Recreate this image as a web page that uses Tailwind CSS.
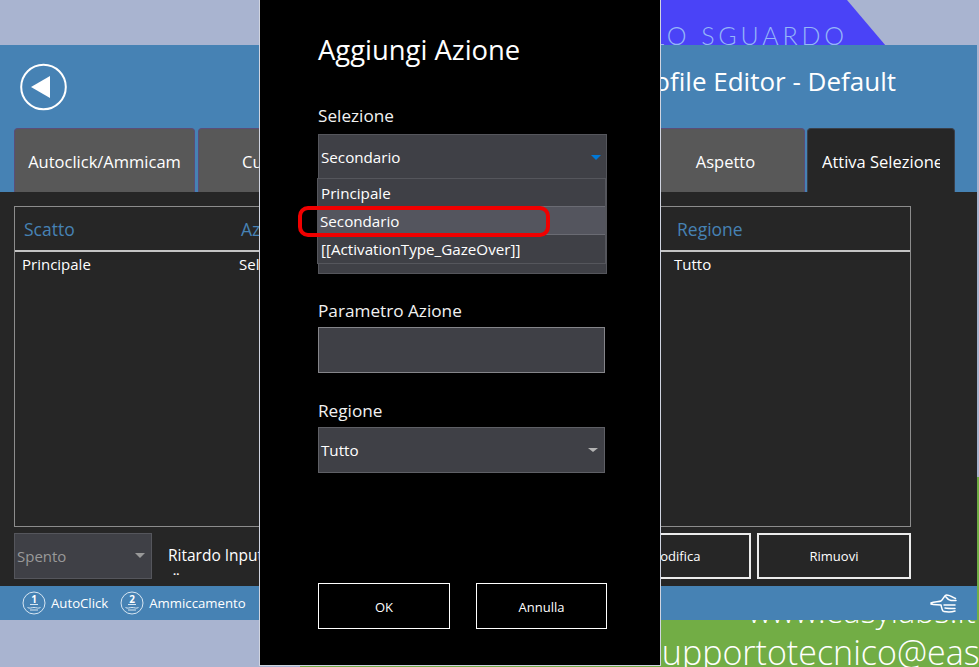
<!DOCTYPE html>
<html lang="en">
<head>
    <meta charset="UTF-8">
    <title>Profile Editor</title>
    <script src="https://cdn.jsdelivr.net/npm/@tailwindcss/browser@4"></script>
</head>
<body class="relative w-[979px] h-[667px] overflow-hidden bg-[#a9b4d0] font-['Open_Sans','Noto_Sans',sans-serif] text-white">

    <!-- desktop wallpaper behind the window -->
    <svg class="absolute left-[300px] top-0" width="600" height="46" viewBox="0 0 600 46">
        <polygon points="0,0 547,0 586,46 0,46" fill="#4a43f7"></polygon>
    </svg>
    <div class="absolute right-[131px] top-[19px] font-['Lato',sans-serif] font-light text-[25px] leading-[32px] tracking-[3.85px] text-[#95b6f8] whitespace-nowrap">LO SGUARDO</div>
    <div class="absolute left-[300px] top-[477px] w-[679px] h-[190px] bg-[#72ad45] overflow-hidden">
        <div class="absolute left-[448px] top-[115px] font-['Open_Sans',sans-serif] font-light text-[32px] leading-[38px] tracking-[0.2px] whitespace-nowrap">www.easylabs.it</div>
        <div class="absolute left-[346px] top-[155px] font-['Open_Sans',sans-serif] font-light text-[34px] leading-[40px] whitespace-nowrap">supportotecnico@easylabs.it</div>
    </div>

    <!-- main window -->
    <div class="relative mt-[45px] w-[977px] h-[575px] flex flex-col bg-[#4682b4]">
        <div class="h-[83px] flex items-center justify-between pl-[20px] pr-[81px]">
            <svg width="48" height="48" viewBox="0 0 48 48">
                <circle cx="23.5" cy="24" r="22.3" fill="none" stroke="#fff" stroke-width="2"></circle>
                <polygon points="11,24 30,13 30,35" fill="#fff"></polygon>
            </svg>
            <div class="text-[26px] leading-[34px] whitespace-nowrap -mt-[12px]">Profile Editor - Default</div>
        </div>

        <div class="h-[64px] flex pl-[14px] text-[16.5px]">
            <div class="w-[181px] mr-[3px] flex items-center justify-center pt-[3px] bg-[#585858] border border-b-0 border-[#5b4d78] rounded-t-[4px] overflow-hidden whitespace-nowrap">Autoclick/Ammicam</div>
            <div class="w-[200px] mr-[2px] flex items-center pl-[43px] pt-[3px] bg-[#585858] border border-b-0 border-[#5b4d78] rounded-t-[4px]">Cursore</div>
            <div class="w-[244px] mr-[2px] bg-[#585858] border border-b-0 border-[#5b4d78] rounded-t-[4px]"></div>
            <div class="w-[159px] mr-[2px] flex items-center justify-center pt-[3px] bg-[#585858] border border-b-0 border-[#5b4d78] rounded-t-[4px]">Aspetto</div>
            <div class="w-[148px] flex items-center pl-[14px] pt-[3px] bg-[#262626] border border-b-0 border-[#3a3f4a] rounded-t-[4px] overflow-hidden whitespace-nowrap"><span class="w-[118px] overflow-hidden">Attiva Selezione</span></div>
        </div>

        <div class="h-[394px] bg-[#262626] pt-[14px] pl-[14px]">
            <div class="w-[897px] h-[321px] border border-[#8c8c8c] flex flex-col">
                <div class="h-[45px] shrink-0 grid grid-cols-[217px_436px_1fr] items-center pl-[9px] pt-[2px] border-b-2 border-[#c4c4c4] text-[17.5px] text-[#4682b4]">
                    <span>Scatto</span>
                    <span>Azione</span>
                    <span>Regione</span>
                </div>
                <div class="grid grid-cols-[217px_435px_1fr] pl-[7px] pt-[2px] text-[15px] leading-[20px]">
                    <span>Principale</span>
                    <span>Selezione</span>
                    <span>Tutto</span>
                </div>
            </div>
            <div class="mt-[6px] w-[897px] h-[46px] flex items-stretch">
                <div class="w-[138px] flex items-center justify-between pl-[2px] pr-[6px] bg-[#3f4046] border border-[#55565c] text-[15px] text-[#999999]">
                    <span>Spento</span>
                    <span class="w-0 h-0 border-x-[5px] border-t-[5px] border-x-transparent border-t-[#999999] -mt-[2px]"></span>
                </div>
                <div class="ml-[16px] w-[260px] pt-[12px] text-[15.5px] leading-[20px] overflow-hidden">Ritardo Input<div class="pl-[5px] font-bold text-[11px] leading-[12px]">..</div></div>
                <div class="ml-[14px] w-[150px] flex items-center justify-center pt-[1px] border-2 border-[#ececec] text-[13px]">Aggiungi</div>
                <div class="ml-[6px] w-[153px] flex items-center justify-center pt-[1px] border-2 border-[#ececec] text-[13px]">Modifica</div>
                <div class="ml-[6px] w-[154px] flex items-center justify-center pt-[1px] border-2 border-[#ececec] text-[13px]">Rimuovi</div>
            </div>
        </div>

        <div class="h-[34px] flex items-center justify-between pl-[22px] pr-[19px] text-[13.2px]">
            <div class="flex items-center">
                <svg width="24" height="24" viewBox="0 0 24 24">
                    <circle cx="12" cy="12" r="11" fill="none" stroke="#d7e6f2" stroke-width="1"></circle>
                    <text x="12" y="12" text-anchor="middle" font-size="10" font-weight="700" fill="#fff">1</text>
                    <path d="M8 13.500h8M5.500 16.500c2 1.400 4 0 6.500 0s4.500 1.400 6.500 0M8 19h8" fill="none" stroke="#d7e6f2" stroke-width="1"></path>
                </svg>
                <span class="ml-[5px] pt-[1px]">AutoClick</span>
                <svg width="24" height="24" viewBox="0 0 24 24" class="ml-[12px]">
                    <circle cx="12" cy="12" r="11" fill="none" stroke="#d7e6f2" stroke-width="1"></circle>
                    <text x="12" y="12" text-anchor="middle" font-size="10" font-weight="700" fill="#fff">2</text>
                    <path d="M8 13.500h8M5.500 16.500c2 1.400 4 0 6.500 0s4.500 1.400 6.500 0M8 19h8" fill="none" stroke="#d7e6f2" stroke-width="1"></path>
                </svg>
                <span class="ml-[5px] pt-[1px]">Ammiccamento</span>
            </div>
            <svg width="28" height="20" viewBox="0 0 28 20" class="-mt-[1px]">
                <path d="M1 10C4 8.500 9 9 11 8 13 6.500 14.500 2 16.500 2c3 0 6 2 9 3.500M16 4c1 1.500 3 3 5 3.500h5M1 11c3 1 7 .5 10 1 .5 2 .8 4.500 2 6M14 12h11M15 15c3 .5 6 .5 10 .5M14 18.500c3 .5 8 .5 11-.5" fill="none" stroke="#fff" stroke-width="1.500" stroke-linecap="round" stroke-linejoin="round"></path>
            </svg>
        </div>
    </div>

    <!-- modal dialog -->
    <div class="absolute left-[259px] -top-[1px] w-[402px] h-[667px] bg-black border border-[#d0d4e0] pl-[58px]">
        <div class="pt-[30px] text-[27.4px] leading-[40px] whitespace-nowrap">Aggiungi Azione</div>

        <div class="mt-[35px] text-[17.2px] leading-[22px] text-[#f2f2f2]">Selezione</div>
        <div class="relative mt-[7px] w-[289px] h-[140px] bg-[#3f4046] border border-[#55565c]">
            <div class="h-[44px] flex items-center justify-between pl-[2px] pr-[5px] text-[15.2px]">
                <span>Secondario</span>
                <span class="w-0 h-0 border-x-[5.500px] border-t-[5px] border-x-transparent border-t-[#0078d7] mt-[1px]"></span>
            </div>
            <div class="absolute -left-[2px] top-[43px] w-[289px] h-[86px] flex flex-col bg-[#3f4046] border border-[#55565c] text-[15.2px]">
                <div class="h-[27px] flex items-center pl-[3px] pt-[1px]">Principale</div>
                <div class="h-[29px] flex items-center pl-[2px] pt-[1px] bg-[#54555e] border-y border-[#6a6b73]">Secondario</div>
                <div class="h-[28px] flex items-center pl-[3px] whitespace-nowrap">[[ActivationType_GazeOver]]</div>
            </div>
        </div>

        <div class="mt-[26px] text-[17.2px] leading-[22px] text-[#f2f2f2]">Parametro Azione</div>
        <div class="mt-[5px] w-[287px] h-[46px] bg-[#3f4046] border border-[#85858a]"></div>

        <div class="mt-[27px] text-[17.2px] leading-[22px] text-[#f2f2f2]">Regione</div>
        <div class="mt-[5px] w-[287px] h-[46px] flex items-center justify-between pl-[2px] pr-[6px] bg-[#3f4046] border border-[#5f6066] text-[15.2px]">
            <span>Tutto</span>
            <span class="w-0 h-0 border-x-[5px] border-t-[4px] border-x-transparent border-t-[#b4b4b4]"></span>
        </div>

        <div class="mt-[110px] flex gap-[26px] text-[13px]">
            <div class="w-[132px] h-[46px] flex items-center justify-center pt-[3px] border border-white">OK</div>
            <div class="w-[131px] h-[46px] flex items-center justify-center pt-[3px] border border-white">Annulla</div>
        </div>
    </div>

    <!-- red highlight drawn on top of the screenshot -->
    <div class="absolute left-[298px] top-[206px] w-[252px] h-[31px] border-4 border-[#f00000] rounded-[10px]"></div>
</body>
</html>
